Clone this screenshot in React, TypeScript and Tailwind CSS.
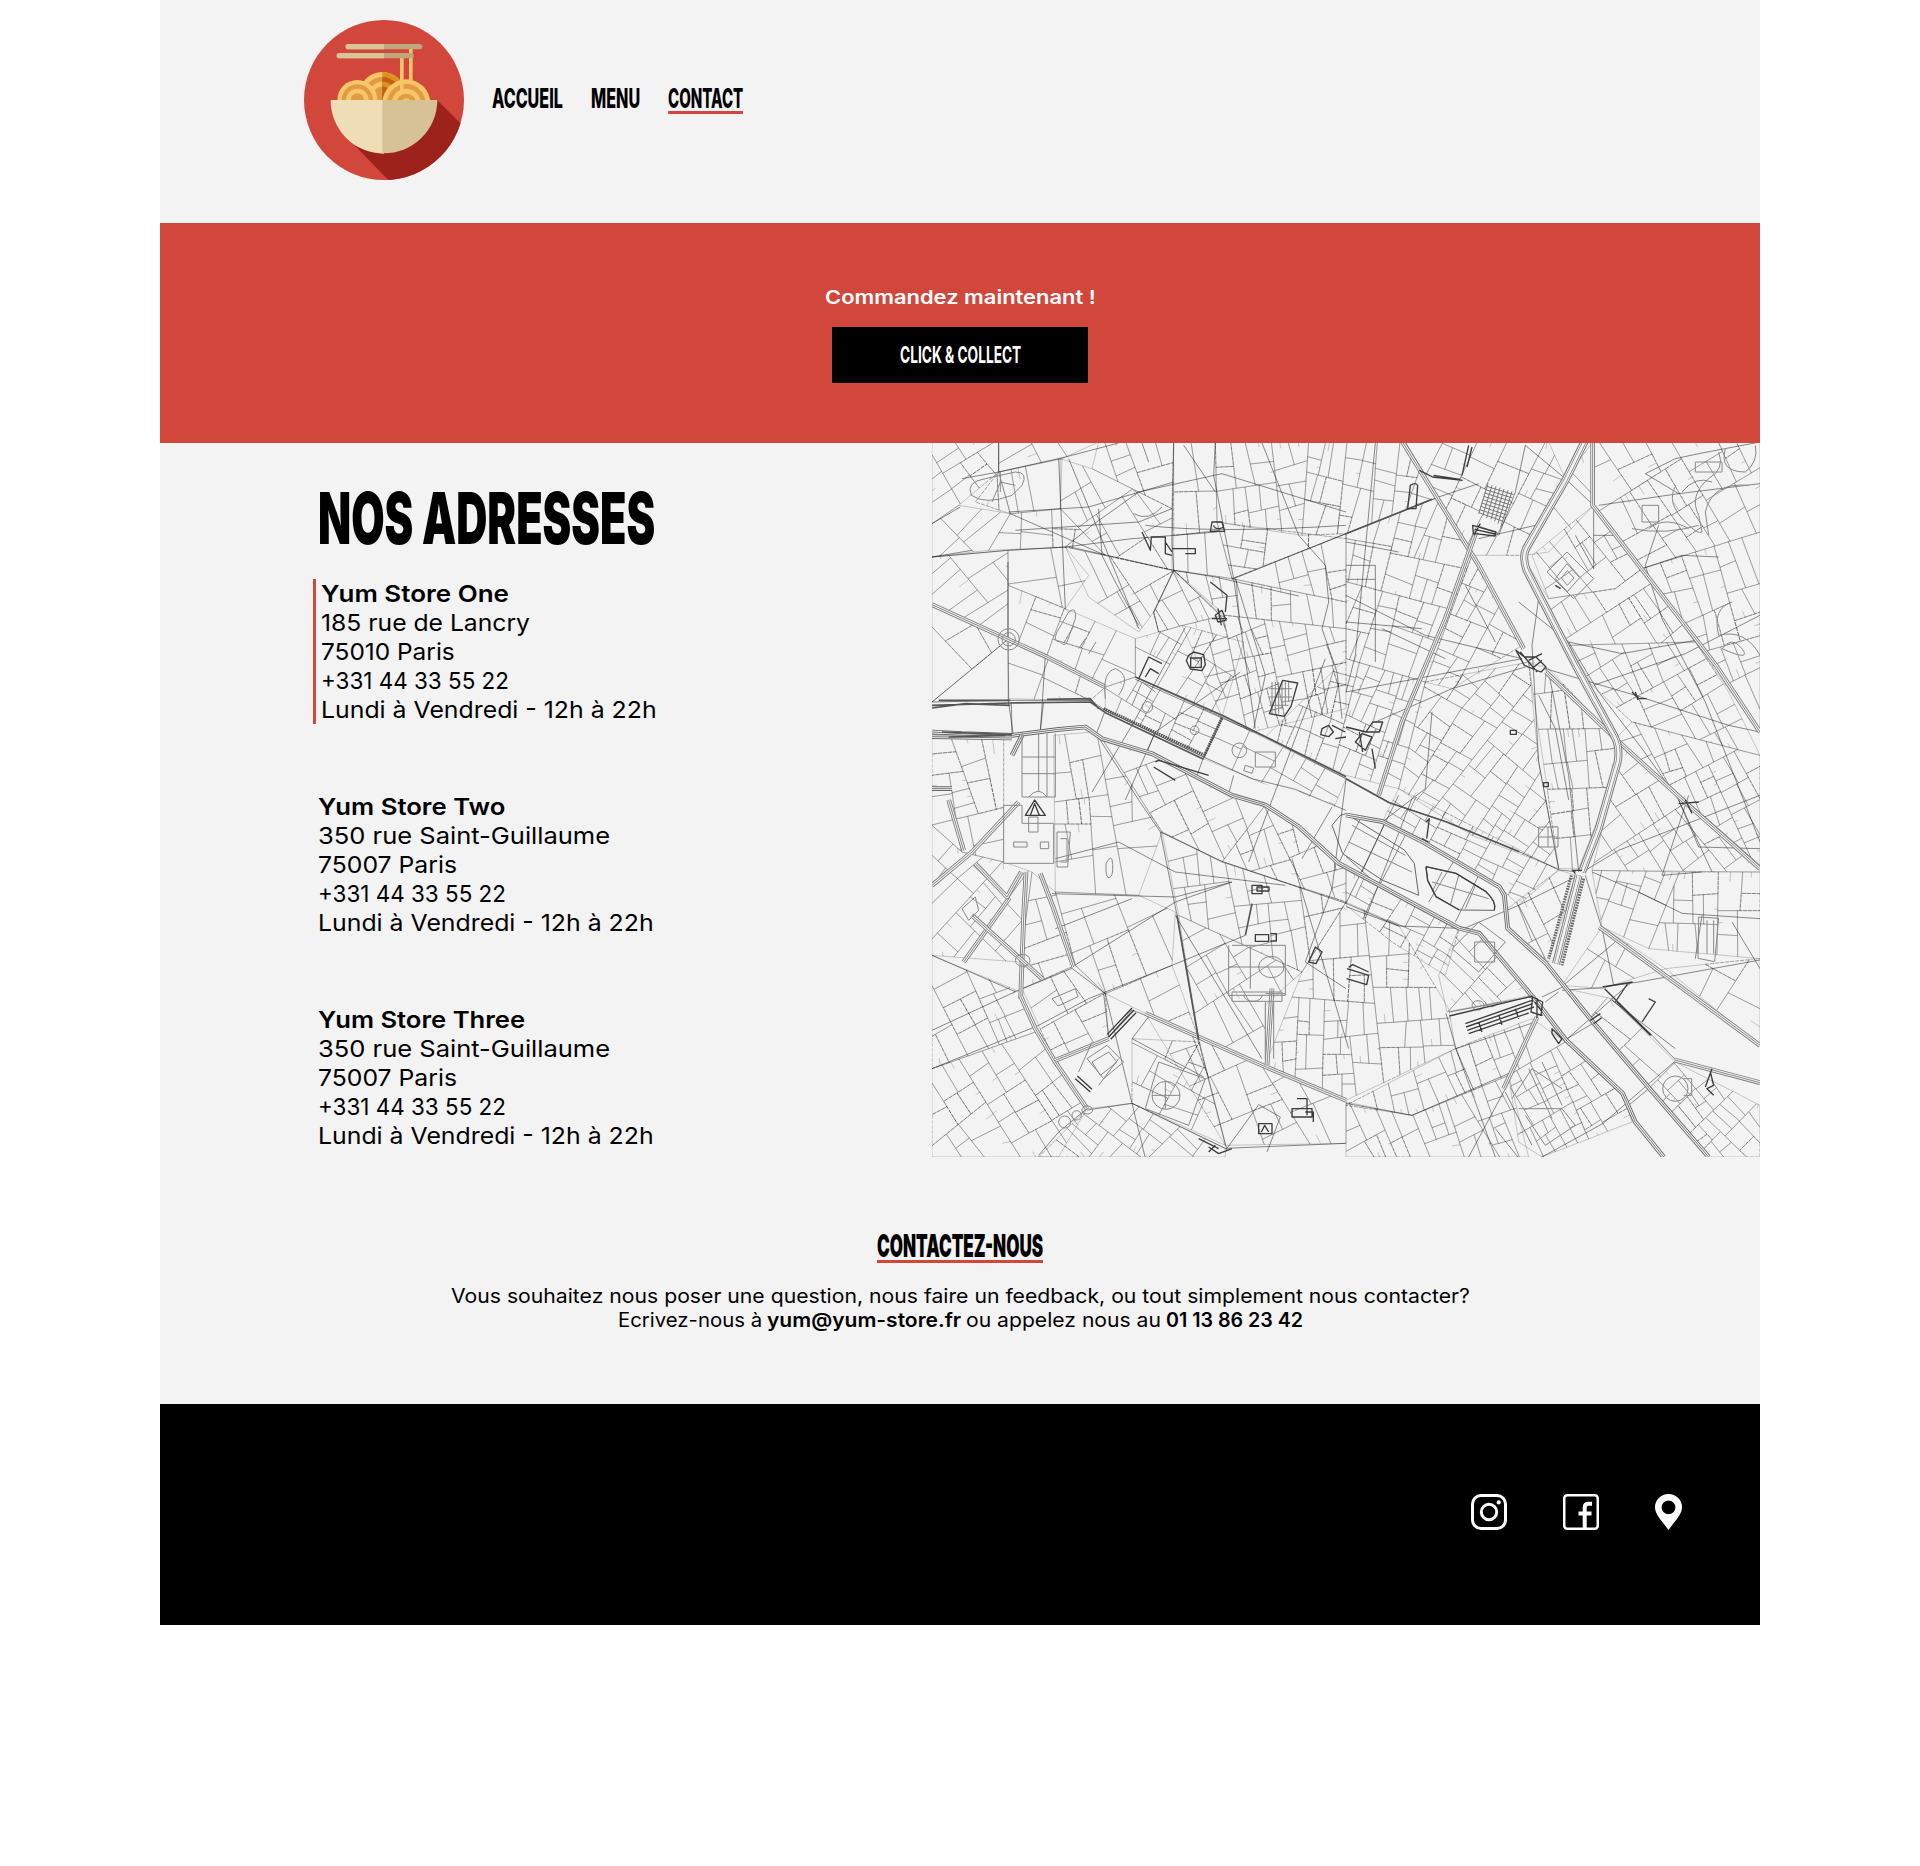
import { useLayoutEffect, useRef, useState, type ReactNode } from "react";

/* Text stretched or condensed horizontally so that it fills its box. */
function Fit({ className, children }: { className: string; children: ReactNode }) {
  const box = useRef<HTMLSpanElement>(null);
  const text = useRef<HTMLSpanElement>(null);
  const [scale, setScale] = useState(1);
  useLayoutEffect(() => {
    if (box.current && text.current) {
      setScale(box.current.clientWidth / text.current.offsetWidth);
    }
  }, []);
  return (
    <span ref={box} className={`block whitespace-nowrap ${className}`}>
      <span ref={text} className="inline-block origin-left" style={{ transform: `scaleX(${scale})` }}>
        {children}
      </span>
    </span>
  );
}

function Logo() {
  return (
    <svg viewBox="0 0 480 480" className="size-40">
      <defs>
        <clipPath id="disc"><circle cx="240" cy="240" r="240" /></clipPath>
        <clipPath id="above"><rect width="480" height="240" /></clipPath>
        <clipPath id="rightHalf"><rect x="235" width="200" height="240" /></clipPath>
      </defs>
      <circle cx="240" cy="240" r="240" fill="#d2473b" />
      <path d="M399 240 L480 320 V480 H253 L150 374Z" fill="#9c221b" clipPath="url(#disc)" />
      <g clipPath="url(#above)">
        <circle cx="235" cy="226" r="70" fill="#f6c667" />
        <circle cx="235" cy="226" r="55" fill="#e29b45" />
        <circle cx="235" cy="226" r="41" fill="#f6c667" />
        <circle cx="235" cy="226" r="27" fill="#e29b45" />
        <g clipPath="url(#rightHalf)">
          <circle cx="235" cy="226" r="70" fill="#db921f" />
          <circle cx="235" cy="226" r="55" fill="#c55d14" />
          <circle cx="235" cy="226" r="41" fill="#db921f" />
          <circle cx="235" cy="226" r="27" fill="#c55d14" />
        </g>
        <circle cx="160" cy="240" r="60" fill="#f6c667" />
        <circle cx="160" cy="240" r="47" fill="#e29b45" />
        <circle cx="160" cy="240" r="34" fill="#f6c667" />
        <circle cx="160" cy="240" r="20" fill="#e29b45" />
        <path d="M288 110h11v100h-11zM315 85h11v120h-11z" fill="#f6c667" />
        <circle cx="307" cy="250" r="72" fill="#f6c667" />
        <circle cx="307" cy="250" r="58" fill="#e29b45" />
        <circle cx="307" cy="250" r="44" fill="#f6c667" />
        <circle cx="307" cy="250" r="29" fill="#e29b45" />
        <circle cx="307" cy="250" r="15" fill="#f6c667" />
        <path d="M288 180h11v32h-11z" fill="#f6c667" />
      </g>
      <rect x="125" y="72" width="230" height="16" rx="8" fill="#bfa67c" />
      <path d="M240 72h-107a8 8 0 0 0 0 16h107z" fill="#d9c495" />
      <rect x="98" y="99" width="231" height="16" rx="8" fill="#bfa67c" />
      <path d="M240 99h-134a8 8 0 0 0 0 16h134z" fill="#d9c495" />
      <path d="M80 240h160v161a160 160 0 0 1-160-161z" fill="#efdeb5" />
      <path d="M235 240h165a160 160 0 0 1-165 160z" fill="#d6c294" />
    </svg>
  );
}

type Pt = [number, number];

const pts = (s: string): Pt[] => s.split(" ").map((p) => p.split(",").map(Number) as Pt);

function random(seed: number) {
  let a = seed;
  return () => {
    a = (a + 0x6d2b79f5) | 0;
    let t = Math.imul(a ^ (a >>> 15), 1 | a);
    t = (t + Math.imul(t ^ (t >>> 7), 61 | t)) ^ t;
    return ((t ^ (t >>> 14)) >>> 0) / 4294967296;
  };
}

/* City districts: outline, main street angle in degrees, typical block area. */
const districts: [string, number, number][] = [
  ["0,0 200,0 200,90 80,190 0,245", -35, 5200],
  ["200,90 390,50 385,200 235,215 130,180", 80, 9000],
  ["200,0 500,0 390,50 200,90", -30, 6500],
  ["0,245 80,190 235,215 170,325 0,345", -40, 6500],
  ["235,215 385,200 520,340 400,315 170,325", 4, 6500],
  ["500,0 725,0 720,200 620,150 480,80", 70, 7000],
  ["385,50 480,80 620,150 720,200 720,385 520,340 385,200", 60, 8500],
  ["725,0 850,0 855,240 900,410 725,385", 84, 8000],
  ["850,0 1130,0 1110,280 855,240", 78, 5200],
  ["855,240 1242,290 1242,275 900,410", 5, 6500],
  ["1130,0 1420,0 1520,165 1242,275 1110,280", 100, 4000],
  ["0,345 228,325 228,590 0,485", -38, 5500],
  ["228,325 400,315 470,400 400,500 228,430", -12, 8500],
  ["228,430 400,500 610,590 610,705 520,735 228,592", 25, 7500],
  ["400,315 725,385 665,510 620,570 470,465", 62, 6500],
  ["665,510 725,385 870,520 680,570", 62, 4200],
  ["725,385 900,410 1242,480 1242,560 880,520", 85, 5200],
  ["900,410 1242,275 1242,480", 75, 4600],
  ["610,590 680,570 750,550 935,600 870,825 610,705", -62, 5000],
  ["750,550 880,520 1242,560 1242,800 960,870 870,825", 74, 3800],
  ["1242,275 1520,165 1620,340 1480,720 1242,650", 103, 4200],
  ["1242,650 1480,720 1400,1040 1242,1000 1000,885", 110, 2800],
  ["0,488 228,592 0,780", 52, 8500],
  ["228,592 520,735 475,775 228,770", 24, 5200],
  ["520,735 610,705 870,825 815,945 520,805", 26, 3800],
  ["870,825 1242,1010 1200,1110 815,950", 28, 5200],
  ["1480,720 1620,340 1770,610 1560,740", 118, 4200],
  ["1420,0 1780,0 1850,0 1900,110 1770,340 1620,340", 112, 5600],
  ["1900,110 1982,0 1985,190 1850,330 1780,340", 45, 6500],
  ["1985,0 2484,0 2484,270 2130,380 1985,190", 60, 7000],
  ["1985,190 2130,380 2050,440 1850,470 1800,340", 55, 4800],
  ["1770,340 1850,470 2050,440 2130,380 2290,600 1910,610", 62, 5000],
  ["2130,380 2484,270 2484,870", 68, 4200],
  ["1910,610 2290,600 2390,750 2484,940 2100,840 1980,730", 64, 4200],
  ["1480,720 1790,660 1820,960 1880,1280 1620,1180 1400,1040", 125, 3600],
  ["1790,660 1850,680 2050,890 2050,1000 1940,1280 1880,1280", 84, 4400],
  ["2050,890 2100,840 2484,940 2484,1270", 60, 4000],
  ["2050,890 2484,1270 2484,1290 1980,1285 2050,1000", 55, 5200],
  ["1352,1139 1400,1040 1880,1284 1760,1390 1702,1334", 30, 3600],
  ["1727,1400 1880,1284 1930,1300 1850,1560 1727,1459", 60, 9000],
  ["1980,1285 2242,1290 2150,1520 2010,1455", 112, 5000],
  ["2242,1290 2484,1290 2484,1550 2150,1520", 88, 6000],
  ["2010,1455 2200,1580 2010,1640 1890,1630", 30, 9000],
  ["2200,1580 2484,1550 2484,1810", 30, 9000],
  ["1900,1640 2040,1670 2230,1860 2150,1940", 42, 6500],
  ["2150,1940 2230,1860 2484,1990 2484,2145 2330,2145", 48, 2600],
  ["0,890 215,880 215,1260 90,1230 0,1150", 78, 5200],
  ["365,880 480,870 510,890 690,1170 620,1360 370,1350", 82, 7500],
  ["510,890 660,935 900,1060 1000,1089 870,1260 690,1170", 65, 6000],
  ["870,1260 1000,1089 1100,1154 1242,1270 1242,1380", 70, 3800],
  ["0,1150 90,1230 215,1260 300,1290 265,1560 0,1540", -48, 7500],
  ["300,1290 370,1350 430,1570 270,1640 265,1560", -15, 6500],
  ["370,1350 620,1360 730,1410 720,1570 520,1655 430,1570", 66, 8500],
  ["690,1170 870,1260 1242,1380 1110,1590 740,1420", 84, 4500],
  ["740,1420 1110,1590 1000,1690 1000,1870 800,1790", 62, 7500],
  ["0,1540 265,1650 310,1770 0,1880", 66, 4800],
  ["0,1880 310,1770 465,2000 380,2145 0,2145", 58, 5000],
  ["270,1640 430,1570 520,1655 530,1790 370,1860", 60, 5200],
  ["520,1655 720,1570 800,1790 640,1714", 66, 6500],
  ["600,1790 800,1800 880,2110 600,1984", 28, 5500],
  ["465,2000 600,1984 880,2120 880,2145 320,2145", 40, 3200],
  ["640,1714 800,1790 1242,1975 1242,2104 880,2110", 64, 6500],
  ["1110,1590 1242,1380 1400,1450 1550,1700 1570,1820 1242,1975 1000,1870", 88, 4500],
  ["1242,1280 1582,1459 1540,1600 1380,1500 1242,1390", 28, 3000],
  ["1580,1460 1642,1474 1800,1660 1545,1710 1520,1600", 45, 3600],
  ["1570,1820 1800,1730 1900,1800 1730,1900 1440,2020 1242,1990", 70, 5500],
  ["1730,1900 1900,1800 2070,1954 2100,2040 1830,2145 1760,2100", 62, 3200],
  ["1242,1980 1440,2020 1730,1900 1790,2145 1242,2145", 66, 4200],
];

function clip(poly: Pt[], px: number, py: number, nx: number, ny: number): Pt[] {
  const out: Pt[] = [];
  poly.forEach((a, i) => {
    const b = poly[(i + 1) % poly.length];
    const da = (a[0] - px) * nx + (a[1] - py) * ny;
    const db = (b[0] - px) * nx + (b[1] - py) * ny;
    if (da >= 0) out.push(a);
    if (da >= 0 !== db >= 0) {
      const t = da / (da - db);
      out.push([a[0] + (b[0] - a[0]) * t, a[1] + (b[1] - a[1]) * t]);
    }
  });
  return out;
}

function area(poly: Pt[]) {
  let s = 0;
  poly.forEach((a, i) => {
    const b = poly[(i + 1) % poly.length];
    s += a[0] * b[1] - b[0] * a[1];
  });
  return Math.abs(s / 2);
}

/* Splits every district into blocks along its own street direction. */
function buildBlocks() {
  const rnd = random(75010);
  let faint = "";
  let dark = "";
  const split = (poly: Pt[], angle: number, size: number) => {
    if (poly.length < 3) return;
    if (area(poly) < size * (0.6 + rnd() * 1.4)) {
      const d = "M" + poly.map((p) => `${p[0].toFixed(0)} ${p[1].toFixed(0)}`).join("L") + "Z";
      if (rnd() < 0.16) dark += d;
      else faint += d;
      if (rnd() < 0.3) {
        const [a, b] = [poly[0], poly[1]];
        const x = (a[0] + b[0]) / 2;
        const y = (a[1] + b[1]) / 2;
        const cx = poly.reduce((s, p) => s + p[0], 0) / poly.length;
        const cy = poly.reduce((s, p) => s + p[1], 0) / poly.length;
        faint += `M${x.toFixed(0)} ${y.toFixed(0)}L${((x + cx) / 2).toFixed(0)} ${((y + cy) / 2).toFixed(0)}`;
      }
      return;
    }
    const c = Math.cos(angle);
    const s = Math.sin(angle);
    const us = poly.map((p) => p[0] * c + p[1] * s);
    const vs = poly.map((p) => -p[0] * s + p[1] * c);
    const u0 = Math.min(...us);
    const u1 = Math.max(...us);
    const v0 = Math.min(...vs);
    const v1 = Math.max(...vs);
    const across = u1 - u0 > (v1 - v0) * (1 + rnd() * 0.7);
    const t = 0.36 + rnd() * 0.28;
    const u = across ? u0 + (u1 - u0) * t : (u0 + u1) / 2;
    const v = across ? (v0 + v1) / 2 : v0 + (v1 - v0) * t;
    const px = u * c - v * s;
    const py = u * s + v * c;
    const turn = angle + (rnd() - 0.5) * 0.22 + (across ? 0 : Math.PI / 2);
    const nx = Math.cos(turn);
    const ny = Math.sin(turn);
    const next = angle + (rnd() - 0.5) * 0.08;
    split(clip(poly, px, py, nx, ny), next, size);
    split(clip(poly, px, py, -nx, -ny), next, size);
  };
  districts.forEach(([outline, angle, size]) => split(pts(outline), (angle * Math.PI) / 180, size));
  return { faint, dark };
}

const blocks = buildBlocks();

const RIVER =
  "M0 800L235 795L475 790L520 822L815 958L960 1018L1100 1050L1242 1110L1352 1145L1472 1205L1702 1340L1717 1365L1727 1465L1842 1574L1982 1745L2152 1950L2330 2150L2195 2150L2110 2040L2072 1954L1902 1794L1802 1660L1642 1474L1582 1455L1442 1384L1332 1322L1220 1258L1100 1148L1000 1082L900 1053L660 930L510 875L460 852L240 858L0 866Z";

/* Avenues drawn as several parallel lines. */
const AVENUES = [
  "M0 488L228 592L345 645L520 735",
  "M1412 0L1640 370L1775 620",
  "M1842 690L2050 890L2270 1090L2484 1280",
  "M1982 0V190L2352 670L2484 870",
  "M1632 270L1540 530L1410 840L1340 1060",
  "M282 1290L276 1400L270 1560L266 1670",
  "M2002 1455L2484 1810",
  "M640 1714L1000 1874L1242 1975",
  "M232 1368L95 1560",
  "M325 1295L365 1400L425 1575",
  "M268 1290L225 1365L130 1265",
  "M120 1420L270 1555L330 1610",
  "M265 1660L310 1760L370 1860L465 2000",
  "M0 1330L120 1230L260 1080",
  "M370 1855L530 1790",
  "M1020 1640L1005 1870",
  "M2228 1854L2484 1922",
  "M1715 1940L1815 1725",
  "M50 1074L95 1225",
];
const CANAL = [
  "M1962 -10L1900 115L1842 215L1782 320Q1770 345 1784 385L1932 672L2046 880Q2065 915 2057 960L2000 1160L1950 1290",
  "M1940 1300L1872 1565",
];
/* Single dark streets. */
const STREETS = [
  "M228 360V592L230 770M228 592L0 780M0 345L228 325L400 315L600 290L855 270M410 314L725 385L850 405L1100 462",
  "M725 0L720 300L725 385L665 512L680 570M725 385L865 520L880 560M900 412L1242 275L1520 165L1640 125",
  "M850 0L845 100L905 410L970 860M755 10L850 150M380 50L400 500M410 50L620 560M620 150L870 95L1242 210",
  "M200 0V90L235 215L520 340M0 345L120 325M90 110L200 90L400 45L560 3M0 245L85 195M230 210L470 195L725 120",
  "M650 60L630 3M620 150L480 250L400 315M990 3L1100 280L1180 370L1190 480L1170 560L1215 690L1230 830",
  "M500 200L510 340L550 420L620 550M250 265L620 240L720 200M640 250Q850 275 1242 250M910 410L1000 700L965 860",
  "M610 712L870 828L1000 885L1242 1010L1372 1082L1542 1139L1762 1229L1882 1284L1932 1289",
  "M870 828L815 945M0 780L235 775L475 775L520 805L815 945L960 1010L1090 1042L1242 1105",
  "M228 770L245 885M340 640L325 870M505 895L620 1074L685 1170L735 1420L800 1794L885 2125",
  "M760 556L600 850L480 1050M925 690L670 870L580 1074M685 1170L870 1258L1242 1384L1400 1452L1582 1459",
  "M1242 1012L1200 1340L1120 1560L1242 1640M1330 3L1270 640L1242 750M1080 1250L1250 1820M950 1260L1180 650",
  "M0 1765L250 1649L420 1579L520 1655L600 1984L640 2148M0 1540L250 1649M0 1880L320 1750L470 1670L720 1570L940 1480",
  "M465 2004L600 1984L880 2119L1242 2104M885 2119L980 1988L1045 2025L1005 2130M380 2070L465 2000M320 2140L380 2070",
  "M530 1785L600 1704L650 1724L600 1790L815 1905M530 1785L515 1655M730 1420L990 1850M370 1250L560 1200L730 1290L1060 1330",
  "M360 1355L620 1362L730 1365L900 1320M370 1460L600 1370M420 1575L730 1380L900 1320",
  "M1330 840L1560 740L1780 675M1540 650L1350 560M1242 460L1480 580L1770 650M1690 600L1600 430",
  "M1242 750L1770 650M1640 290L1810 250L1900 130M1780 10L1750 150L1700 280M1780 10L1900 110L1985 190L1985 380L1930 280",
  "M1820 470L1800 610L1820 960L1880 1280M1850 690L1910 1000L1940 1290M1820 760L1870 860L1910 1074",
  "M1910 600L2070 635L2290 595M1985 730L2260 635L2484 520M1840 680L2110 760L2390 850L2484 870",
  "M1985 280H2050M2000 190L2240 155L2484 125M2240 155L2140 95M2140 95L2230 50L2300 35L2484 0M2130 380L2250 340L2360 345",
  "M1760 480L1910 600L2000 750L2130 920L2240 1074L2340 1290M2180 250L2140 370L2190 530L2320 780L2484 1200",
  "M1597 1459L1760 1390L1930 1305M1760 1390L1840 1550M1242 1394L1400 1452M1980 1290L2120 1350L2250 1414L2484 1430",
  "M1960 1300L2010 1460L2045 1630M1900 1625L2050 1500M2010 1635L2120 1620L2484 1554M1890 1645L2010 1637",
  "M1902 1794L2075 1640L2100 1620M2040 1674L2160 1780L2232 1855M2232 1855L2012 2045L1830 2145M1830 1665L1902 1630",
  "M1242 1984L1440 2020L1740 1890M1542 1714L1572 1820L1810 1740M1552 1710L1800 1664M1572 1820L1690 2145",
  "M1720 1940L1610 2145M1690 2060L1760 2148M1720 1950L1800 2110M2040 1674L2230 1820M2270 1060L2190 1300L2310 1290",
  "M2240 1074L2300 1215L2484 1220M2310 1420L2290 1550M2400 1440L2484 1580M1960 1285L2060 1225L2484 1060",
  "M1500 810L1480 1040L1352 1139M1440 1070L1300 1430M1400 1060L1242 1384M1242 1244L1332 1324L1442 1384L1582 1459",
  "M1242 540L1470 560M1330 370H1242M1242 300L1400 330M1330 370V660M1242 412H1330",
];
const BANKS = [
  "M0 870L90 875L240 880L380 862L460 855L510 890L660 935L900 1060L1000 1089L1100 1154L1220 1264L1332 1324L1442 1384L1582 1459L1642 1474L1802 1664L1902 1794L2072 1954L2110 2040L2195 2145",
  "M1242 1119L1352 1139L1472 1199L1702 1334L1717 1359L1727 1459L1842 1564L1982 1739L2152 1939L2330 2145",
  "M0 884L240 888M60 1040L0 1040M270 880L240 940",
];
const GREY_DETAILS = [
  /* parks and gardens */
  "M118 160Q100 120 160 110L250 90Q290 90 270 130L240 160Q160 190 118 160ZM205 90V150M180 180L205 120L250 130",
  "M385 600Q360 600 375 570L410 510Q435 490 430 530L405 600Q398 615 385 600ZM440 620L460 590M470 635L492 600",
  "M270 1144H365V1264H215V1090H270ZM290 1125H318V1170H290ZM245 1200h40v15h-40zM325 1200h25v20h-25z",
  "M900 1510H1060V1660H890V1510M955 1510V1640M890 1575H1060M980 1575a38 32 0 1 0 76 0a38 32 0 1 0-76 0M1000 1655h60",
  "M900 1650h150v28h-150zM935 1658a28 20 0 1 0 56 0M1000 1680V1850M1025 1680V1850",
  "M660 1960a42 42 0 1 0 84 0a42 42 0 1 0-84 0M680 1860L820 1910L770 2050L640 2000ZM700 1920V2000M660 1960H744",
  "M465 1850l60-40 50 50-60 50zM480 1860l50-30 25 30-50 40zM440 1890l40-90M500 1930l60-80",
  "M270 875V1065H370V875M270 945H370M270 995H370M320 875V1050M345 875V1065M290 1065Q320 1030 345 1065",
  "M2232 130Q2200 180 2260 240Q2300 280 2310 270L2300 220Q2270 160 2330 110Q2380 80 2360 30M2250 150Q2290 100 2340 120M2290 60h80v30h-80zM2380 20Q2360 90 2440 90Q2480 60 2470 10M2450 130Q2340 120 2320 210L2330 280",
  "M2130 190h50v50h-50zM2100 260Q2200 280 2300 250M2150 260Q2200 220 2270 260",
  "M1870 410l35-45 38 42-37 42zM1888 408l18-22 20 22-20 22zM1845 390l60-60 80 80-60 60z",
  "M1820 1155h58v60h-58zM1848 1155v60M1820 1185h58",
  "M2300 1425l60 4-12 130-50-10zM2325 1435v100M2345 1435v100",
  "M2192 1940a38 38 0 1 0 76 0a38 38 0 1 0-76 0M2255 1910h24v50h-24",
  "M2400 480Q2340 500 2360 580Q2440 560 2484 640M2370 620q30-40 60 0t-60 0",
  "M630 795a16 16 0 1 0 32 0a16 16 0 1 0-32 0M775 865a13 13 0 1 0 26 0a13 13 0 1 0-26 0M600 790l30-70 40 30M520 770Q510 690 550 680Q600 700 560 760",
  "M900 925a22 22 0 1 0 44 0a22 22 0 1 0-44 0M970 930h60v45h-60zM940 970l25 8-5 16-25-8z",
  "M1628 1500h60v60h-60zM1640 1440l80 60-80 90-80-70zM1620 1690a18 14 0 1 0 36 0a18 14 0 1 0-36 0M1660 1680a18 14 0 1 0 36 0",
  "M210 592a20 20 0 1 0 40 0a20 20 0 1 0-40 0M198 592a32 32 0 1 0 64 0a32 32 0 1 0-64 0M250 1555a22 18 0 1 0 44 0a22 18 0 1 0-44 0",
  "M380 2040a18 18 0 1 0 36 0a18 18 0 1 0-36 0M420 2020a14 14 0 1 0 28 0a14 14 0 1 0-28 0M450 2004a16 12 0 1 0 32 0a16 12 0 1 0-32 0",
  "M375 1170h40l-8 105h-32zM385 1190h20v70h-20M522 1265q-2 45 10 42t10-40t-20-2",
  "M605 215Q650 240 690 195M90 1400l40-35 10 40-30 30zM360 1670l70-30 8 24-60 28z",
  "M1740 1970l60-90 90 60M1760 2000h130l40 50-90 60-60-90M1790 1880l70 150M1830 1860l60 130",
];
const DARK_DETAILS = [
  /* stations, squares and landmarks */
  "M630 270L655 325L658 285H700V335L720 340M720 320H790V335H760M840 240L870 240L878 268H835ZM845 250a15 10 0 1 0 30 0M700 300l20 30",
  "M770 640l15-10 30 8 5 30-10 18-35-5-12-25zM776 648h32v28h-32z",
  "M850 520l20-15 12 30-24 5zM858 500l10 50M840 530l45 0M835 420l50 40-5 50",
  "M620 710L650 645L690 665M640 705L655 680L680 695M670 960L680 955L830 1000M665 975L730 1015",
  "M280 1120L308 1074L340 1120ZM295 1120L308 1085L322 1120",
  "M1012 815l40-100 45 8-20 70-20 30z",
  "M1170 860l20-10 14 20-14 14-24-6zM1200 850l40 20M1210 890l32-5M1242 855l60 15 20-30 30 0-10 30-40 0M1270 900l20-25 30 10-20 40zM1282 870l10 60M1320 920l10 60",
  "M1622 250l70 20-3 12-65-8zM1628 262l62 14M1625 280l20-35M1435 130q15-10 22 0l-5 70h-25zM1462 85l40 20 90 10M1505 100l80 12M1610 10l-20 90M1620 15l-15 60",
  "M1752 625l25 45 50 20 15-15-30-30-35 0zM1765 630l50 60M1800 680l30-25M1790 655l40-20",
  "M2100 750l20 20 24 0M2110 750l8 24M1870 430l16 10M1735 865h18v12h-18zM1835 1022h14v12h-14z",
  "M1130 1560L1150 1515L1170 1530L1152 1565ZM1245 1580l65 20-6 28-60-18M1250 1576l12-8 48 22",
  "M960 1330h30v25h-30zM975 1335h36v12h-36zM970 1478h40v20h-40zM1015 1475h18v22h-18",
  "M530 1785L606 1704M536 1792L612 1712M525 1778L600 1698M430 1910L475 1950M436 1902L480 1942",
  "M1080 2000h60v25h-60zM1095 1970h30v50M1120 2010h24v30M980 2045h40v30h-40zM988 2070l10-20 12 20",
  "M1802 1665l30 15-5 40-30-10zM1808 1680l20 25M1860 1760l30 30-10 15-20-30zM1812 1715l20 5M1815 1668l0 60",
  "M1602 1755l200-70M1606 1765l200-70M1610 1775l180-62M1600 1745l200-70M1552 1722l250-60M1640 1740l10 30M1700 1718l10 30M1750 1700l10 30",
  "M2012 1635l90-15M2050 1680l40-60M2055 1680l60 60 40 40M2018 1640l140 140M2150 1670l20 10-40 60M1975 1735l30-20M1985 1745l24-18",
  "M2335 1890l10 40-20 10 20 20M2340 1880l-20 55M1920 1285l30 0M1930 1295l-10-12M2240 1085l60-5M2260 1074l20 40",
  "M1482 1274L1572 1294L1662 1349Q1695 1380 1687 1405M1482 1274L1487 1315L1512 1364L1582 1404",
  "M830 2115l30 20 40-15M850 2110l-20 20M800 2090l60 30M1482 1140l10-10-8 60M1470 1190l20 10",
];
const ISLANDS =
  "M1482 1274L1572 1294L1662 1349Q1695 1380 1687 1405L1582 1404L1512 1364L1487 1315ZM1225 1120L1242 1115L1417 1224L1447 1264L1460 1360L1350 1314L1232 1235L1200 1150Z";
const BRIDGES =
  "M520 805L495 870M670 870L645 930M815 945L795 1000M905 1000L890 1055M1200 1095L1110 1250M1290 1120L1220 1264M1360 1140L1290 1290M1420 1180L1345 1325M1570 1250L1490 1380M1640 1300L1570 1440M1880 1650L1840 1680M1990 1740L1905 1790M2150 1940L2090 1990M238 780L240 880M335 780L325 862M1530 1290L1500 1350M1580 1300L1555 1390M1630 1330L1600 1400M1500 1320L1670 1370M1260 1150L1420 1240M1250 1200L1440 1290";

function CityMap() {
  return (
    <svg viewBox="0 3 2484 2142" preserveAspectRatio="none" className="h-[714px] w-[828px]" fill="none" strokeLinejoin="round">
      <path d={blocks.faint} stroke="#000" strokeOpacity="0.27" strokeWidth="2.2" />
      <path d={blocks.dark} stroke="#000" strokeOpacity="0.42" strokeWidth="2.4" strokeDasharray="12 3" />
      <path d="M270 1144H365V1264H215V1090H270Z" fill="#f3f3f3" />
      <path d="M2100 1640L2484 1800V1920L2228 1850Z" fill="#f3f3f3" />
      <path d={RIVER} fill="#f3f3f3" />
      <path d={ISLANDS} fill="#f3f3f3" stroke="#666" strokeWidth="3" />
      <path d={BRIDGES} stroke="#888" strokeWidth="3" />
      {STREETS.map((d) => (
        <path key={d} d={d} stroke="#000" strokeOpacity="0.45" strokeWidth="3" />
      ))}
      {AVENUES.map((d) => (
        <g key={d}>
          <path d={d} stroke="#777" strokeWidth="14" />
          <path d={d} stroke="#f3f3f3" strokeWidth="9" />
          <path d={d} stroke="#888" strokeWidth="3" />
        </g>
      ))}
      {CANAL.map((d) => (
        <g key={d}>
          <path d={d} stroke="#777" strokeWidth="24" />
          <path d={d} stroke="#f3f3f3" strokeWidth="18" />
          <path d={d} stroke="#777" strokeWidth="12" />
          <path d={d} stroke="#f3f3f3" strokeWidth="8" />
        </g>
      ))}
      {BANKS.map((d) => (
        <g key={d}>
          <path d={d} stroke="#666" strokeWidth="14" />
          <path d={d} stroke="#f3f3f3" strokeWidth="8.5" />
          <path d={d} stroke="#777" strokeWidth="3" />
        </g>
      ))}
      <path d="M0 790L235 783L475 780L520 812L815 952M0 798L100 785L235 790M345 772L475 770L500 800M20 775H235M30 870L240 878M50 885L220 880M610 705L875 822L1242 1004" stroke="#555" strokeWidth="5" />
      <path d="M870 828L815 945M515 800L815 938" stroke="#555" strokeWidth="9" strokeDasharray="5 2" />
      <path d="M1918 1300L1850 1550M1955 1310L1890 1570" stroke="#666" strokeWidth="9" strokeDasharray="5 3" />
      <path d="M735 1420L800 1794M1242 1010L1372 1082L1542 1139L1762 1229M1242 275L1500 172M960 1385L940 1480" stroke="#555" strokeWidth="5" />
      <path d="M1020 720V815M1030 720V815M1040 720V815M1050 720V800M1060 720V790M1070 720V780M1012 740H1080M1012 765H1080M1012 790H1070" stroke="#888" strokeWidth="3" />
      <path d="M1668 125L1748 150L1705 255L1640 215Z" fill="#f3f3f3" />
      <path d="M1664 133L1745 158M1661 143L1742 168M1658 153L1738 178M1655 163L1734 188M1652 173L1730 198M1649 183L1726 208M1646 193L1722 218M1643 203L1718 228M1641 212L1714 238M1668 125L1640 215M1680 130L1652 222M1692 133L1664 228M1704 137L1677 232M1716 141L1688 238M1728 145L1698 245M1740 148L1706 255" stroke="#777" strokeWidth="3" />
      {GREY_DETAILS.map((d) => (
        <path key={d} d={d} stroke="#888" strokeWidth="3" />
      ))}
      {DARK_DETAILS.map((d) => (
        <path key={d} d={d} stroke="#3c3c3c" strokeWidth="4" />
      ))}
    </svg>
  );
}

const display = "font-['Inter',sans-serif]";

const stores = [
  {
    active: true,
    name: ["Yum Store One", "w-[188px]"],
    lines: [
      ["185 rue de Lancry", "w-[209px]"],
      ["75010 Paris", "w-[134px]"],
      ["+331 44 33 55 22", "w-[188px]"],
      ["Lundi à Vendredi - 12h à 22h", "w-[336px]"],
    ],
  },
  {
    active: false,
    name: ["Yum Store Two", "w-[187px]"],
    lines: [
      ["350 rue Saint-Guillaume", "w-[292px]"],
      ["75007 Paris", "w-[139px]"],
      ["+331 44 33 55 22", "w-[188px]"],
      ["Lundi à Vendredi - 12h à 22h", "w-[336px]"],
    ],
  },
  {
    active: false,
    name: ["Yum Store Three", "w-[207px]"],
    lines: [
      ["350 rue Saint-Guillaume", "w-[292px]"],
      ["75007 Paris", "w-[139px]"],
      ["+331 44 33 55 22", "w-[188px]"],
      ["Lundi à Vendredi - 12h à 22h", "w-[336px]"],
    ],
  },
];

export default function App() {
  return (
    <div className="min-h-[1866px] bg-white font-['Inter',sans-serif] text-black">
      <div className="mx-auto w-[1600px] bg-[#f3f3f3]">
        <header className="flex h-[223px] items-start pt-5 pl-36">
          <Logo />
          <nav className={`ml-7 flex gap-7 pt-[61px] text-[27px] leading-[35px] font-extrabold ${display}`}>
            <Fit className="w-[71px]">ACCUEIL</Fit>
            <Fit className="w-[49px]">MENU</Fit>
            <Fit className="h-[33px] w-[75px] border-b-3 border-[#d2473b]">CONTACT</Fit>
          </nav>
        </header>

        <section className="flex h-[220px] flex-col items-center bg-[#d2473b] pt-[60px]">
          <Fit className="h-[44px] w-[271px] text-[19px] leading-[29px] font-semibold text-white">Commandez maintenant !</Fit>
          <button className="flex h-14 w-64 items-center justify-center bg-black text-white">
            <Fit className={`w-[121px] text-[23px] leading-[54px] font-bold ${display}`}>CLICK &amp; COLLECT</Fit>
          </button>
        </section>

        <section className="flex justify-between">
          <div className="pt-9 pl-[153px]">
            <h1 className={`ml-[5px] h-[100px] text-[71px] leading-[79px] font-black ${display}`}>
              <Fit className="w-[337px]">NOS ADRESSES</Fit>
            </h1>
            <div className="flex flex-col gap-[68px]">
              {stores.map((s) => (
                <address
                  key={s.name[0]}
                  className={`text-[24px] leading-[29px] font-normal not-italic ${s.active ? "border-l-3 border-[#d2473b] pl-[5px]" : "pl-[5px]"}`}
                >
                  <Fit className={`text-[23.5px] font-semibold ${s.name[1]}`}>{s.name[0]}</Fit>
                  {s.lines.map(([text, width]) => (
                    <Fit key={text} className={`text-[23.5px] ${width}`}>
                      {text}
                    </Fit>
                  ))}
                </address>
              ))}
            </div>
          </div>
          <CityMap />
        </section>

        <section className="flex h-[247px] flex-col items-center pt-[70px]">
          <h2 className={`h-[36px] border-b-3 border-[#d2473b] text-[31px] leading-[38px] font-black ${display}`}>
            <Fit className="w-[166px]">CONTACTEZ-NOUS</Fit>
          </h2>
          <div className="mt-[21px] flex flex-col items-center text-[19.5px] leading-6">
            <Fit className="w-[1019px]">
              Vous souhaitez nous poser une question, nous faire un feedback, ou tout simplement nous contacter?
            </Fit>
            <div className="flex gap-[5px]">
              <Fit className="w-[144px]">Ecrivez-nous à</Fit>
              <Fit className="w-[194px] font-semibold">yum@yum-store.fr</Fit>
              <Fit className="w-[195px]">ou appelez nous au</Fit>
              <Fit className="w-[137px] font-semibold">01 13 86 23 42</Fit>
            </div>
          </div>
        </section>

        <footer className="flex h-[221px] items-start justify-end gap-14 bg-black pt-[90px] pr-[78px]">
          <svg viewBox="0 0 36 36" className="size-9" fill="none" stroke="#fff" strokeWidth="3">
            <rect x="1.5" y="1.5" width="33" height="33" rx="8.5" />
            <circle cx="18" cy="18" r="7.7" />
            <circle cx="27.7" cy="8.4" r="2.1" fill="#fff" stroke="none" />
          </svg>
          <svg viewBox="0 0 36 36" className="size-9" fill="none" stroke="#fff">
            <rect x="1.25" y="1.25" width="33.5" height="33.5" rx="3" strokeWidth="2.5" />
            <path d="M21.7 35V13.5Q21.7 9.8 25.5 9.8H29M15.5 19.5H28.5" strokeWidth="4" />
          </svg>
          <svg viewBox="0 0 27 36" className="h-9 w-[27px]" fill="#fff">
            <path fillRule="evenodd" d="M13.5 0A13.4 13.4 0 0 0 0 13.3C0 21 8 28 13.5 36 19 28 27 21 27 13.3A13.4 13.4 0 0 0 13.5 0ZM13.5 6.5a6.9 6.9 0 1 1 0 13.8a6.9 6.9 0 0 1 0-13.8Z" />
          </svg>
        </footer>
      </div>
    </div>
  );
}
